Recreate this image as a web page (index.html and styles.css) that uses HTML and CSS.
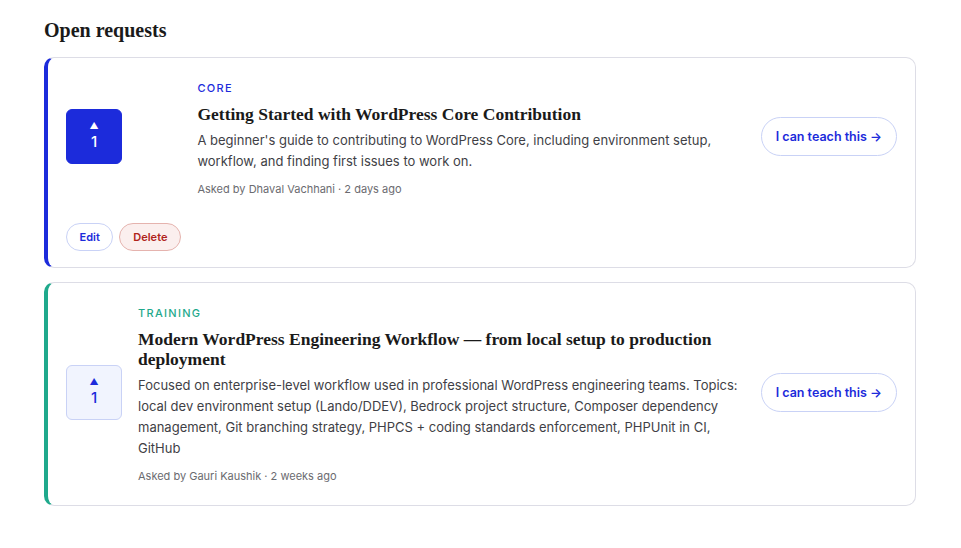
FILE: index.html
```html
<!DOCTYPE html>
<html lang="en">

<head>
  <meta charset="UTF-8">
  <meta name="viewport" content="width=device-width, initial-scale=1.0">
  <title>Open requests</title>
  <link rel="stylesheet" href="styles.css">
</head>

<body>
  <main class="page">
    <h2 class="section-title">Open requests</h2>

    <div class="request-list">
      <article class="request-card track-core is-owner">
        <button class="vote-btn voted" title="Upvote">
          <span class="vote-arrow">▲</span>
          <span class="vote-count">1</span>
        </button>
        <div class="request-body">
          <span class="track-label">Core</span>
          <h3 class="request-title">Getting Started with WordPress Core Contribution</h3>
          <p class="request-desc">A beginner's guide to contributing to WordPress Core, including environment setup, workflow, and finding first issues to work on.</p>
          <p class="request-meta">Asked by Dhaval Vachhani · 2 days ago</p>
        </div>
        <button class="teach-btn">I can teach this →</button>
        <div class="owner-actions">
          <button class="small-btn edit-btn">Edit</button>
          <button class="small-btn delete-btn">Delete</button>
        </div>
      </article>

      <article class="request-card track-training">
        <button class="vote-btn" title="Upvote">
          <span class="vote-arrow">▲</span>
          <span class="vote-count">1</span>
        </button>
        <div class="request-body">
          <span class="track-label">Training</span>
          <h3 class="request-title">Modern WordPress Engineering Workflow — from local setup to production deployment</h3>
          <p class="request-desc">Focused on enterprise-level workflow used in professional WordPress engineering teams. Topics: local dev environment setup (Lando/DDEV), Bedrock project structure, Composer dependency management, Git branching strategy, PHPCS + coding standards enforcement, PHPUnit in CI, GitHub</p>
          <p class="request-meta">Asked by Gauri Kaushik · 2 weeks ago</p>
        </div>
        <button class="teach-btn">I can teach this →</button>
      </article>
    </div>
  </main>
</body>

</html>
```

FILE: styles.css
```css
body {
  margin: 0;
  background-color: #ffffff;
  font-family: Inter, "Noto Sans", Arial, sans-serif;
  color: #1e1e1e;
}

.page {
  padding: 18px 45px 30px 44px;
}

.section-title {
  margin: 0 0 15px;
  font-family: "Liberation Serif", "Times New Roman", serif;
  font-size: 20px;
  line-height: 24px;
  font-weight: bold;
  color: #1a1a1a;
}

.request-list {
  display: flex;
  flex-direction: column;
  gap: 14px;
}

.request-card {
  display: grid;
  grid-template-columns: auto 1fr auto;
  column-gap: 16px;
  row-gap: 31px;
  align-items: center;
  padding: 22px 18px 26px 18px;
  border: 1px solid #dddde6;
  border-left: 4px solid #1c2bdb;
  border-radius: 10px;
  background-color: white;
}

.request-card.is-owner {
  padding-bottom: 16px;
}

.track-training {
  border-left-color: #1fa98c;
}

.vote-btn {
  justify-self: start;
  display: flex;
  flex-direction: column;
  align-items: center;
  justify-content: center;
  gap: 2px;
  width: 56px;
  height: 55px;
  padding: 0;
  border: 1px solid #c9d2f6;
  border-radius: 6px;
  background-color: #f1f4fe;
  color: #1c2bdb;
  font-family: inherit;
  cursor: pointer;
}

.vote-btn.voted {
  background-color: #1c2bdb;
  border-color: #1c2bdb;
  color: white;
}

.vote-arrow {
  font-size: 9px;
  line-height: 10px;
}

.vote-count {
  font-size: 15px;
  line-height: 18px;
  font-weight: 500;
}

.track-label {
  display: block;
  margin-bottom: 8px;
  font-size: 11px;
  line-height: 16px;
  font-weight: 500;
  letter-spacing: 1.3px;
  text-transform: uppercase;
  color: #1c2bdb;
}

.track-training .track-label {
  color: #1fa98c;
}

.request-title {
  margin: 0;
  font-family: "Liberation Serif", "Times New Roman", serif;
  font-size: 17.5px;
  line-height: 20px;
  font-weight: bold;
  color: #1a1a1a;
}

.request-desc {
  margin: 6px 0 0;
  font-size: 13px;
  line-height: 21px;
  color: #3f3f46;
}

.request-meta {
  margin: 11px 0 -3px;
  font-size: 11px;
  line-height: 12px;
  color: #6b6b70;
}

.teach-btn {
  height: 39px;
  padding: 0 14px;
  border: 1px solid #c9d2f6;
  border-radius: 20px;
  background-color: white;
  color: #1c2bdb;
  font-family: inherit;
  font-size: 12.5px;
  font-weight: 600;
  cursor: pointer;
}

.owner-actions {
  grid-column: 1;
  display: flex;
  gap: 6px;
}

.small-btn {
  height: 28px;
  padding: 0 13px;
  border-radius: 14px;
  font-family: inherit;
  font-size: 11px;
  font-weight: 600;
  cursor: pointer;
}

.edit-btn {
  padding: 0 12.5px;
  border: 1px solid #c9d2f6;
  background-color: white;
  color: #1c2bdb;
}

.delete-btn {
  border: 1px solid #e5b3ae;
  background-color: #fbefee;
  color: #b0231b;
}
```
